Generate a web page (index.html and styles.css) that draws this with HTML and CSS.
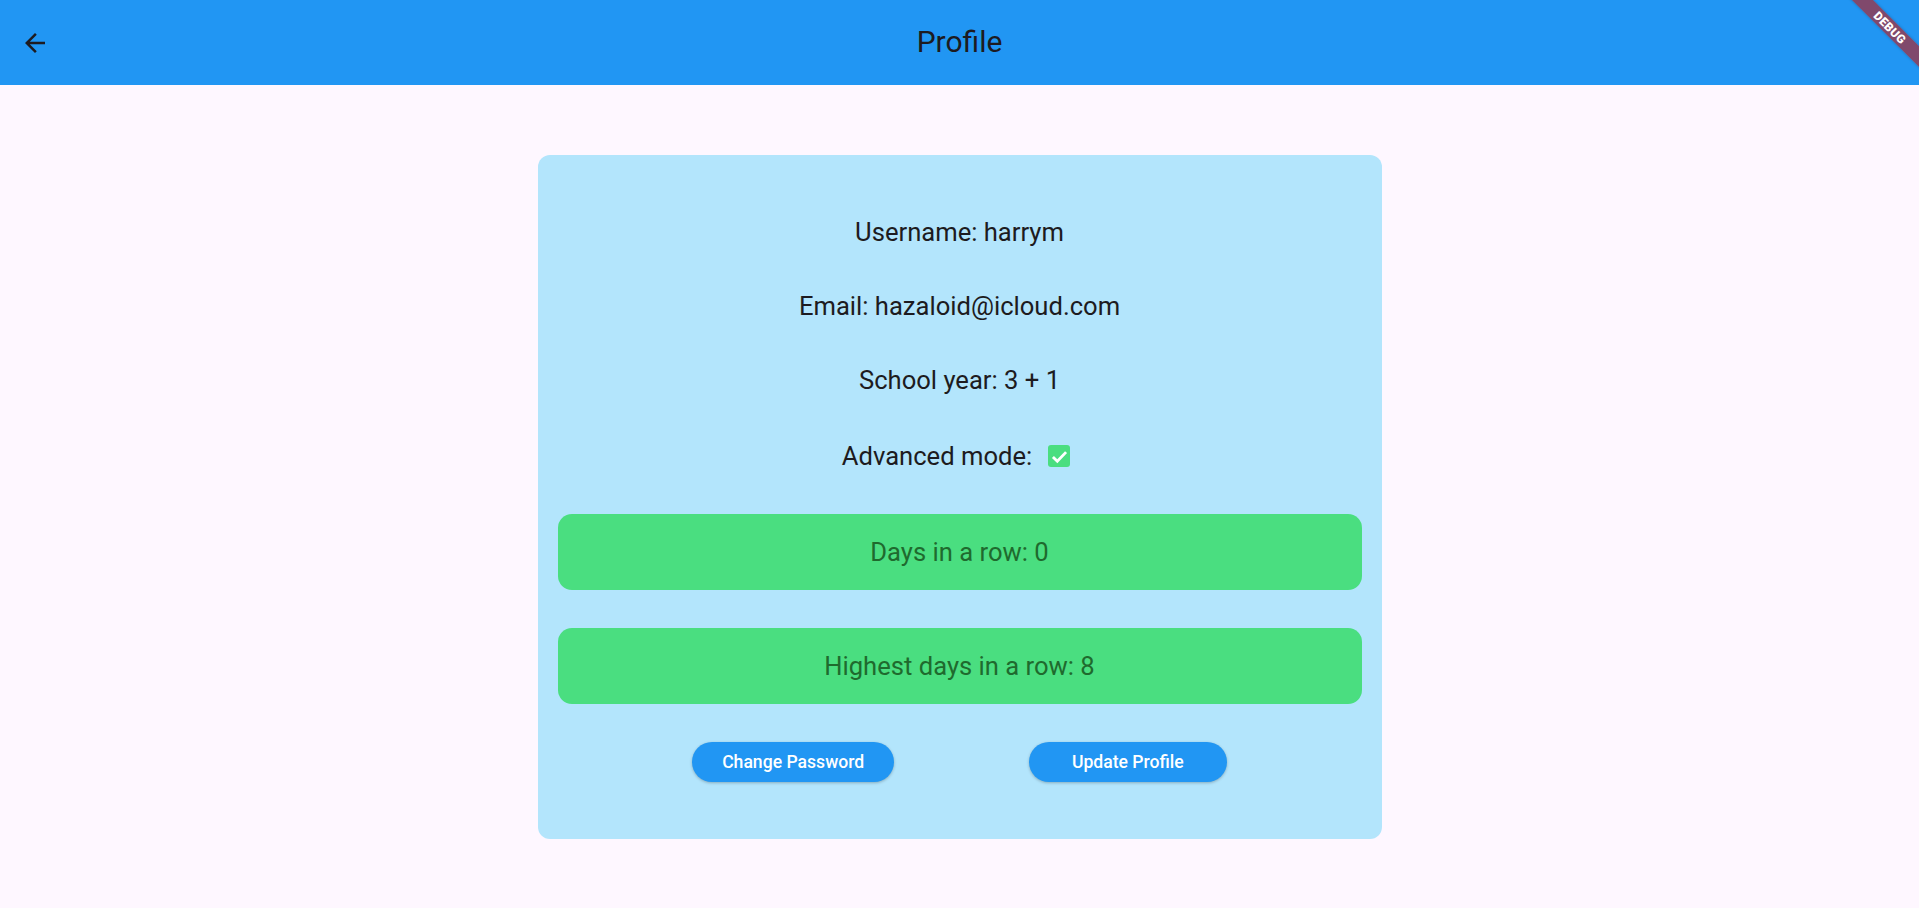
FILE: index.html
```html
<!DOCTYPE html>
<html lang="en">
<head>
<meta charset="utf-8">
<title>Profile</title>
<link rel="stylesheet" href="styles.css">
</head>
<body>
<header class="appbar">
  <div class="appbar-lead">
    <button class="icon-btn" aria-label="Back">
      <svg viewBox="0 0 24 24" width="30" height="30"><path d="M20 11H7.83l5.59-5.59L12 4l-8 8 8 8 1.41-1.41L7.83 13H20v-2z" fill="#1d1b20"/></svg>
    </button>
  </div>
  <h1 class="appbar-title">Profile</h1>
  <div class="appbar-trail"></div>
  <div class="debug-banner"><span>DEBUG</span></div>
</header>
<main class="page">
  <section class="card">
    <p class="info first">Username: harrym</p>
    <p class="info">Email: hazaloid@icloud.com</p>
    <p class="info">School year: 3 + 1</p>
    <div class="info adv">
      <span>Advanced mode:</span>
      <span class="check">
        <svg viewBox="0 0 24 24" width="21" height="21"><path d="M4.5 12.5l5 5L19.5 7" fill="none" stroke="#fff" stroke-width="3.2"/></svg>
      </span>
    </div>
    <div class="streak first-streak">Days in a row: 0</div>
    <div class="streak">Highest days in a row: 8</div>
    <div class="actions">
      <button class="pill pill-password">Change Password</button>
      <button class="pill pill-update">Update Profile</button>
    </div>
  </section>
</main>
</body>
</html>
```
FILE: styles.css
```css
* { box-sizing: border-box; }
html, body { margin: 0; padding: 0; }
body {
  background: #fef7ff;
  font-family: Roboto, "Liberation Sans", sans-serif;
  color: #1d1b20;
  height: 908px;
  overflow: hidden;
}
.appbar {
  position: relative;
  height: 85px;
  background: #2196f3;
  display: grid;
  grid-template-columns: 1fr auto 1fr;
  align-items: center;
  overflow: hidden;
}
.appbar-lead { display: flex; align-items: center; padding-left: 20px; }
.icon-btn {
  border: 0; background: transparent; padding: 0; margin: 0;
  width: 30px; height: 30px; display: flex; cursor: pointer;
}
.appbar-title {
  margin: 0;
  padding-bottom: 1px;
  font-weight: 400;
  font-size: 30px;
  line-height: 36px;
  color: #1d1b20;
}
.debug-banner {
  position: absolute;
  top: 20px;
  right: -26px;
  width: 110px;
  height: 15px;
  background: rgba(183, 28, 28, 0.63);
  transform: rotate(45deg);
  display: flex;
  align-items: center;
  justify-content: center;
  box-shadow: 0 0 3px rgba(0,0,0,0.25);
}
.debug-banner span {
  color: #fff;
  font-weight: 900;
  font-size: 12px;
  letter-spacing: 0.3px;
  line-height: 1;
}
.page {
  display: flex;
  justify-content: center;
  padding-top: 70px;
}
.card {
  width: 844px;
  background: #b3e5fc;
  border-radius: 12px;
  padding: 20px 20px 57px;
  display: flex;
  flex-direction: column;
  align-items: stretch;
}
.info {
  margin: 42px 0 0;
  text-align: center;
  font-size: 25.6px;
  line-height: 32px;
  height: 32px;
}
.info.first { margin-top: 41px; }
.adv {
  display: flex;
  justify-content: center;
  align-items: center;
  gap: 16px;
  margin-top: 44px;
}
.check {
  width: 22px; height: 22px;
  margin-right: 7px;
  border-radius: 3px;
  background: #4ade80;
  display: flex; align-items: center; justify-content: center;
}
.streak {
  height: 76px;
  border-radius: 14px;
  background: #4ade80;
  color: #1f6a2e;
  font-size: 25.6px;
  display: flex;
  align-items: center;
  justify-content: center;
  margin-top: 38px;
}
.streak.first-streak { margin-top: 42px; }
.actions {
  margin-top: 38px;
  display: flex;
  justify-content: space-evenly;
}
.pill {
  height: 40px;
  border: 0;
  border-radius: 20px;
  background: #2196f3;
  color: #fff;
  font-family: Roboto, "Liberation Sans", sans-serif;
  font-weight: 500;
  font-size: 17.6px;
  padding: 0;
  box-shadow: 0 1px 3px rgba(0,0,0,0.25);
}
.pill-password { width: 202px; }
.pill-update { width: 198px; }
```
